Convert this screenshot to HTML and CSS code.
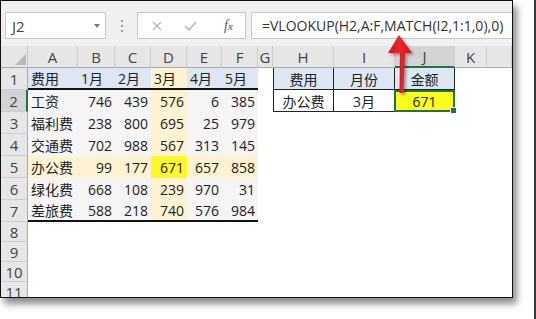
FILE: index.html
```html
<!DOCTYPE html>
<html lang="zh-CN">
<head>
    <meta charset="UTF-8">
    <meta name="viewport" content="width=device-width, initial-scale=1.0">
    <title>VLOOKUP + MATCH</title>
    <link rel="stylesheet" href="styles.css">
</head>
<body>
    <div class="page">
        <div class="window">
            <div class="formula-bar">
                <div class="name-box"><span>J2</span><span class="caret"></span></div>
                <div class="grip"><i></i><i></i><i></i></div>
                <div class="fn-box">
                    <svg class="btn-cancel" width="10" height="10" viewBox="0 0 10 10">
                        <path d="M1 1 L9 9 M9 1 L1 9" stroke="#b4b4b4" stroke-width="1.3" fill="none"/>
                    </svg>
                    <svg class="btn-enter" width="13" height="10" viewBox="0 0 13 10">
                        <path d="M1 5 L5 9 L12 1" stroke="#b4b4b4" stroke-width="1.5" fill="none"/>
                    </svg>
                    <span class="fx">f<small>x</small></span>
                </div>
                <div class="formula">=VLOOKUP(H2,A:F,MATCH(I2,1:1,0),0)</div>
            </div>
            <div class="sheet" id="sheet"></div>

            <svg class="arrow" viewBox="0 0 513 298">
                <defs>
                    <linearGradient id="red" x1="0" x2="1" y1="0" y2="0">
                        <stop offset="0" stop-color="#c8161d"/>
                        <stop offset="0.5" stop-color="#f0262d"/>
                        <stop offset="1" stop-color="#c8161d"/>
                    </linearGradient>
                    <filter id="shade" x="-50%" y="-50%" width="200%" height="200%">
                        <feDropShadow dx="2" dy="2" stdDeviation="1.5" flood-color="#000" flood-opacity="0.35"/>
                    </filter>
                </defs>
                <g filter="url(#shade)">
                    <path d="M400 50 L405 50 L403.5 93 L399.5 93 Z" fill="url(#red)"/>
                    <path d="M399 35 L412 53 L388 53 Z" fill="url(#red)"/>
                </g>
            </svg>
        </div>
        <div class="edge"></div>
    </div>

    <script>
        // last column is only partly visible, so its letter is left out
        const letters = ['A', 'B', 'C', 'D', 'E', 'F', 'G', 'H', 'I', 'J', 'K', ''];

        // rows 1-7 of the sheet, columns A-F plus the lookup table in H-J
        const data = [
            ['费用', '1月', '2月', '3月', '4月', '5月', '', '费用', '月份', '金额'],
            ['工资', 746, 439, 576, 6, 385, '', '办公费', '3月', 671],
            ['福利费', 238, 800, 695, 25, 979],
            ['交通费', 702, 988, 567, 313, 145],
            ['办公费', 99, 177, 671, 657, 858],
            ['绿化费', 668, 108, 239, 970, 31],
            ['差旅费', 588, 218, 740, 576, 984]
        ];

        const sheet = document.getElementById('sheet');

        function addCell(text, classes) {
            const cell = document.createElement('div');
            cell.className = 'cell ' + classes;
            cell.textContent = text;
            sheet.appendChild(cell);
            return cell;
        }

        // column header row
        addCell('', 'corner');
        letters.forEach(l => addCell(l, 'col-head' + (l === 'J' ? ' active' : '')));

        for (let r = 1; r <= 11; r++) {
            addCell(r, 'row-head' + (r === 2 ? ' active' : ''));
            const row = data[r - 1] || [];
            letters.forEach((l, c) => {
                const value = row[c] === undefined ? '' : row[c];
                const cls = [];
                if (c <= 5 && r <= 7) {
                    cls.push('data');
                    cls.push(typeof value === 'number' ? 'num' : 'txt');
                    if (r === 1) cls.push('head-blue');
                    if (c === 3) cls.push('hl-col');
                    if (r === 5) cls.push('hl-row');
                    if (r === 5 && c === 3) cls.push('hit');
                    if (r === 1 || r === 7) cls.push('rule');
                }
                if (c >= 7 && c <= 9 && r <= 2) {
                    cls.push('tbl');
                    if (c === 7) cls.push('tbl-first');
                    if (r === 1) cls.push('tbl-head');
                    if (r === 2 && c === 9) cls.push('picked');
                }
                addCell(value, cls.join(' '));
            });
        }
    </script>
</body>
</html>
```

FILE: styles.css
```css
body {
    margin: 0;
    background-color: #fff;
    font-family: "Open Sans", "Noto Sans CJK SC", sans-serif;
}
.page {
    display: flex;
    justify-content: space-between;
    height: 319px;
}
.window {
    position: relative;
    width: 513px;
    height: 298px;
    box-sizing: border-box;
    border: 1px solid #111;
    background-color: #fff;
    box-shadow: 4px 6px 7px rgba(0, 0, 0, 0.45);
    overflow: hidden;
}
.edge {
    width: 2px;
    background-color: #3a3a3a;
}

/* formula bar */
.formula-bar {
    display: flex;
    align-items: flex-start;
    height: 45px;
    box-sizing: border-box;
    padding: 11px 0 0 4px;
    background-color: #f0f0f0;
}
.name-box {
    width: 101px;
    height: 27px;
    box-sizing: border-box;
    border: 1px solid #c8c8c8;
    background-color: #fff;
    display: flex;
    align-items: center;
    justify-content: space-between;
    padding: 0 5px 0 6px;
    font-size: 15px;
    color: #444;
}
.caret {
    border-left: 3px solid transparent;
    border-right: 3px solid transparent;
    border-top: 4px solid #777;
}
.grip {
    width: 31px;
    height: 27px;
    display: flex;
    flex-direction: column;
    align-items: center;
    justify-content: center;
    gap: 3px;
}
.grip i {
    width: 2px;
    height: 2px;
    background-color: #9c9c9c;
}
.fn-box {
    width: 109px;
    height: 27px;
    box-sizing: border-box;
    border: 1px solid #c8c8c8;
    background-color: #fff;
    display: flex;
    align-items: center;
}
.btn-cancel {
    margin-left: 14px;
}
.btn-enter {
    margin-left: 22px;
}
.fx {
    margin-left: 27px;
    font-family: "Liberation Serif", serif;
    font-style: italic;
    font-size: 14px;
    color: #555;
}
.fx small {
    font-size: 11px;
}
.formula {
    flex: 1;
    height: 27px;
    margin-left: 5px;
    box-sizing: border-box;
    border: 1px solid #c8c8c8;
    border-right: none;
    background-color: #fff;
    padding-left: 10px;
    font-size: 14px;
    line-height: 25px;
    color: #333;
    white-space: nowrap;
}

/* grid */
.sheet {
    display: grid;
    grid-template-columns: 27px 50px 37px 36px 36px 35px 36px 15px 61px 61px 60px 32px 1fr;
    grid-template-rows: 22px repeat(7, 22px) repeat(4, 20px);
}
.cell {
    position: relative;
    box-sizing: border-box;
    display: flex;
    align-items: center;
    padding: 0 3px;
    font-size: 14px;
    color: #222;
    white-space: nowrap;
    overflow: hidden;
}
.corner {
    background-color: #e6e6e6;
    border-right: 1px solid #c8c8c8;
    border-bottom: 1px solid #ababab;
}
.corner::after {
    content: "";
    position: absolute;
    right: 1px;
    bottom: 2px;
    border-left: 11px solid transparent;
    border-bottom: 11px solid #b9b9b9;
}
.col-head {
    justify-content: center;
    background-color: #e6e6e6;
    border-right: 1px solid #cdcdcd;
    border-bottom: 1px solid #ababab;
    font-size: 15px;
    color: #444;
}
.row-head {
    justify-content: center;
    background-color: #e6e6e6;
    border-right: 1px solid #ababab;
    border-bottom: 1px solid #cdcdcd;
    font-size: 15px;
    color: #444;
    padding: 0;
}
.col-head.active {
    background-color: #d3d3d3;
    border-bottom: 2px solid #217346;
}
.row-head.active {
    background-color: #d3d3d3;
    border-right: 2px solid #217346;
}

/* data block A1:F7 */
.data {
    background-color: #f5f5f5;
}
.txt {
    justify-content: flex-start;
}
.num {
    justify-content: flex-end;
}
.head-blue {
    background-color: #dde7f3;
}
.hl-col,
.hl-row {
    background-color: #fdf3d3;
}
.hit {
    background-color: #fcf82a;
}
.rule {
    border-bottom: 2px solid #111;
}

/* lookup table H1:J2 */
.tbl {
    justify-content: center;
    border-right: 1px solid #222;
    border-bottom: 1px solid #222;
}
.tbl-first {
    border-left: 1px solid #222;
}
.tbl-head {
    background-color: #dde7f3;
}
.picked {
    overflow: visible;
    background-color: #fbfb1e;
    border: 2px solid #217346;
    margin-left: -1px;
}
.picked::after {
    content: "";
    position: absolute;
    right: -4px;
    bottom: -4px;
    width: 5px;
    height: 5px;
    background-color: #217346;
    border: 1px solid #fff;
    z-index: 1;
}

.arrow {
    position: absolute;
    top: -1px;
    left: -1px;
    width: 513px;
    height: 298px;
    pointer-events: none;
}
```
